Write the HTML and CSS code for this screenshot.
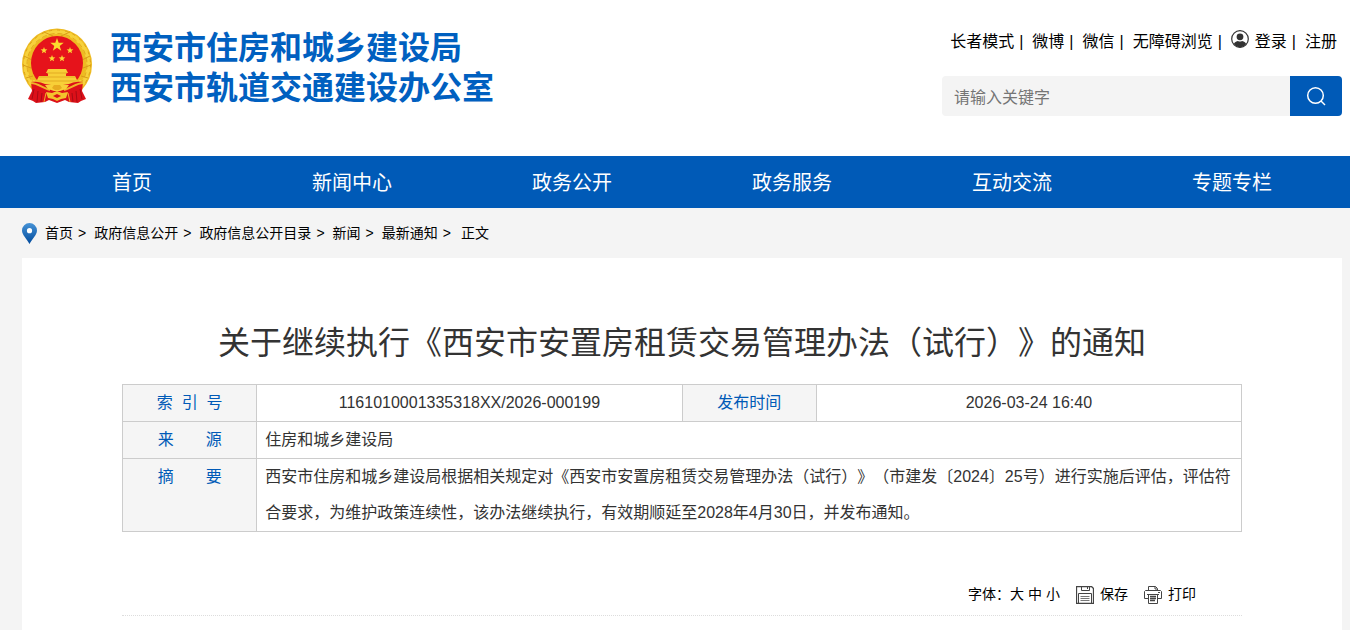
FILE: index.html
```
<!DOCTYPE html>
<html lang="zh-CN">

<head>
    <meta charset="UTF-8">
    <meta name="viewport" content="width=device-width, initial-scale=1.0">
    <title>关于继续执行《西安市安置房租赁交易管理办法（试行）》的通知</title>
    <link rel="stylesheet" href="styles.css">
</head>

<body>
    <header class="header wrap">
        <a class="logo" href="#">
            <svg class="emblem" viewBox="0 0 70 77" aria-hidden="true">
                <!-- wheat ring -->
                <ellipse cx="35" cy="36.500" rx="35" ry="36" fill="#eebb22" />
                <ellipse cx="35" cy="36.500" rx="31.500" ry="32.500" fill="none" stroke="#f7d23c" stroke-width="4" />
                <ellipse cx="35" cy="36.500" rx="30" ry="31" fill="none" stroke="#e2a81c" stroke-width="1" stroke-dasharray="5 3" />
                <ellipse cx="35" cy="36.500" rx="33.500" ry="34.500" fill="none" stroke="#dda31a" stroke-width="1" stroke-dasharray="3 5" />
                <path d="M22 4l9 4M48 4l-9 4M2 28l8 4M1 37l8 3M68 28l-8 4M69 37l-8 3M4 50l7-2M66 50l-7-2" fill="none" stroke="#d99c18" />
                <ellipse cx="35" cy="35" rx="26" ry="27" fill="#e6131b" />
                <!-- stars -->
                <path d="M35 10l1.700 4.700 5 .1-4 3.100 1.500 4.800-4.200-2.900-4.200 2.900 1.500-4.800-4-3.100 5-.1z" fill="#fbdc2e" />
                <path id="star" d="M22 19l.9 2.300 2.500.1-2 1.500.7 2.400-2.100-1.400-2.100 1.400.7-2.400-2-1.500 2.500-.1z" fill="#fbd733" />
                <use href="#star" x="26" />
                <use href="#star" x="8" y="8" />
                <use href="#star" x="18" y="8" />
                <!-- gate -->
                <path d="M26 41h18l2 4h-2v3h9l2 4h4l1 4H10l1-4h4l2-4h9v-3h-2z" fill="#f8cf38" />
                <path d="M25 45h20M17 49h36M13 53h44" stroke="#e3ab22" fill="none" />
                <!-- drapery -->
                <path d="M9 54c5-1 10 0 17 3h18c7-3 12-4 17-3l-1 9 4 8-5 2-3 2-9-1-4-2-8 3-8-3-4 2-9 1-3-2-5-2 4-8z" fill="#dc1019" />
                <path d="M9 55c6 0 12 5 19 7M61 55c-6 0-12 5-19 7" fill="none" stroke="#f0b428" stroke-width="2" />
                <path d="M12 61l-2 10M16 63l-1 11M20 65l-1 9M58 61l2 10M54 63l1 11M50 65l1 9" fill="none" stroke="#a80b14" />
                <path d="M24 65l-2 9M46 65l2 9" stroke="#f0b428" fill="none" />
                <!-- gear -->
                <path d="M23 57l6-1 2-2h8l2 2 6 1-3 4-6 2h-6l-6-2z" fill="#f8cf38" />
                <path d="M30 60l2-3h6l2 3-3 2h-4z" fill="#e8ab20" />
                <path d="M24 64l6 1 5-2 5 2 6-1-2 6-5 1-4 2-4-2-5-1z" fill="#f3c22d" />
                <path d="M31 68l4-2 4 2-4 2z" fill="#dc1019" />
            </svg>
            <span class="logo-text">西安市住房和城乡建设局<br>西安市轨道交通建设办公室</span>
        </a>
        <div class="header-right">
            <div class="top-links">
                <a href="#">长者模式</a><span class="sep">|</span>
                <a href="#">微博</a><span class="sep">|</span>
                <a href="#">微信</a><span class="sep">|</span>
                <a href="#">无障碍浏览</a><span class="sep">|</span>
                <a class="login" href="#">
                    <svg class="user-icon" viewBox="0 0 18 18" aria-hidden="true">
                        <circle cx="9" cy="9" r="8.300" fill="#fff" stroke="#333" stroke-width="1.200" />
                        <circle cx="9" cy="6.800" r="3.400" fill="#333" />
                        <path d="M2.800 14c1.200-2.300 3-3 4.200-3 1.300.8 2.700.8 4 0 1.200 0 3 .7 4.200 3-1.500 2-3.600 3.200-6.200 3.200S4.300 16 2.800 14z" fill="#333" />
                    </svg>登录</a><span class="sep">|</span>
                <a href="#">注册</a>
            </div>
            <form class="search">
                <input type="text" class="search-input" aria-label="请输入关键字" placeholder="请输入关键字">
                <button type="button" class="search-btn" aria-label="搜索">
                    <svg width="20" height="20" viewBox="0 0 20 20" fill="none" stroke="#fff" stroke-width="1.500" aria-hidden="true">
                        <circle cx="9.500" cy="9.500" r="7.800" />
                        <path d="M15 15l4 4" />
                    </svg>
                </button>
            </form>
        </div>
    </header>

    <nav class="nav">
        <div class="nav-list wrap">
            <a href="#">首页</a>
            <a href="#">新闻中心</a>
            <a href="#">政务公开</a>
            <a href="#">政务服务</a>
            <a href="#">互动交流</a>
            <a href="#">专题专栏</a>
        </div>
    </nav>

    <main class="wrap">
        <div class="crumbs">
            <svg class="pin" viewBox="0 0 15 21" aria-hidden="true">
                <defs>
                    <linearGradient id="pinFill" x1="0" y1="0" x2="0" y2="1">
                        <stop offset="0" stop-color="#4793d6" />
                        <stop offset="1" stop-color="#004a9c" />
                    </linearGradient>
                </defs>
                <path d="M7.500 0A7.500 7.500 0 0 0 0 7.500C0 12 5 16 7.500 21 10 16 15 12 15 7.500A7.500 7.500 0 0 0 7.500 0z" fill="url(#pinFill)" />
                <circle cx="7.500" cy="7.700" r="2.600" fill="#fff" />
            </svg>
            <a href="#">首页</a><span class="arrow">&gt;</span>
            <a href="#">政府信息公开</a><span class="arrow">&gt;</span>
            <a href="#">政府信息公开目录</a><span class="arrow">&gt;</span>
            <a href="#">新闻</a><span class="arrow">&gt;</span>
            <a href="#">最新通知</a><span class="arrow">&gt;</span>
            <span class="current">正文</span>
        </div>

        <article class="article">
            <h1 class="title">关于继续执行《西安市安置房租赁交易管理办法（试行）》的通知</h1>
            <table class="info">
                <tr>
                    <th>索&nbsp;&nbsp;引&nbsp;&nbsp;号</th>
                    <td class="center">1161010001335318XX/2026-000199</td>
                    <th>发布时间</th>
                    <td class="center">2026-03-24 16:40</td>
                </tr>
                <tr>
                    <th>来&emsp;&emsp;源</th>
                    <td colspan="3">住房和城乡建设局</td>
                </tr>
                <tr>
                    <th>摘&emsp;&emsp;要</th>
                    <td colspan="3">西安市住房和城乡建设局根据相关规定对《西安市安置房租赁交易管理办法（试行）》（市建发〔2024〕25号）进行实施后评估，评估符合要求，为维护政策连续性，该办法继续执行，有效期顺延至2028年4月30日，并发布通知。</td>
                </tr>
            </table>
            <div class="tools">
                <div class="font-size">
                    <span>字体：</span>
                    <a href="#">大</a>
                    <a href="#">中</a>
                    <a href="#">小</a>
                </div>
                <a class="tool" href="#">
                    <svg width="18" height="18" viewBox="0 0 18 18" fill="none" stroke="#444" aria-hidden="true">
                        <path d="M.5.500h15l2 2v15H.5z" stroke-width="1.300" />
                        <path d="M5.500.500v4h8v-4M11.500 1v2" />
                        <path d="M2.500 17V7.500h13V17" />
                        <path d="M4.500 10.500h9M4.500 12.500h9M4.500 14.500h9" stroke="#777" />
                    </svg>保存</a>
                <a class="tool" href="#">
                    <svg width="18" height="18" viewBox="0 0 18 18" fill="none" stroke="#444" aria-hidden="true">
                        <path d="M4.500 4.500v-4h7l2 2v2M11 .500v2.500h2" />
                        <path d="M4 12.500H.5v-7l1-1h15l1 1v7H14" />
                        <path d="M3 8.500h12M4.500 8.500v9h9v-9" />
                        <path d="M6 10.500h6M6 12.500h6M6 14.500h5" stroke-width="1.500" />
                        <path d="M14 6.500h2" />
                    </svg>打印</a>
            </div>
        </article>
    </main>
</body>

</html>
```
FILE: styles.css
```
* {
    box-sizing: border-box;
}

body {
    margin: 0;
    font-family: "Liberation Sans", "Noto Sans CJK SC", sans-serif;
    font-size: 16px;
    color: #333;
    background-color: #f4f4f4;
    text-spacing-trim: space-all;
}

a {
    color: inherit;
    text-decoration: none;
}

.wrap {
    padding: 0 8px 0 22px;
}

/* Header */
.header {
    display: flex;
    justify-content: space-between;
    height: 156px;
    background-color: #fff;
}

.logo {
    display: flex;
    align-items: flex-start;
    gap: 18px;
    padding-top: 28px;
}

.emblem {
    width: 70px;
    height: 77px;
}

.logo-text {
    font-size: 32px;
    font-weight: bold;
    line-height: 40px;
    color: #0060c0;
}

.header-right {
    width: 400px;
    padding-top: 30px;
}

.top-links {
    display: flex;
    justify-content: flex-end;
    height: 24px;
    padding-right: 5px;
    line-height: 24px;
    color: #000;
    white-space: nowrap;
}

.sep {
    margin: 0 9px 0 5px;
}

.login {
    display: flex;
}

.user-icon {
    width: 18px;
    height: 18px;
    margin-right: 6px;
}

.search {
    display: flex;
    height: 40px;
    margin-top: 22px;
}

.search-input {
    flex: 1;
    min-width: 0;
    padding: 3px 12px 0;
    border: none;
    border-radius: 4px 0 0 4px;
    background-color: #f4f4f4;
    font-family: inherit;
    font-size: 16px;
}

.search-input::placeholder {
    color: #757575;
}

.search-btn {
    display: flex;
    align-items: center;
    justify-content: center;
    width: 52px;
    padding: 0;
    border: none;
    border-radius: 0 4px 4px 0;
    background-color: #005ab7;
    cursor: pointer;
}

/* Navigation */
.nav {
    background-color: #005ab7;
}

.nav-list {
    display: flex;
    height: 52px;
}

.nav-list a {
    flex: 1;
    font-size: 20px;
    line-height: 54px;
    text-align: center;
    color: #fff;
}

/* Breadcrumb */
.crumbs {
    display: flex;
    align-items: center;
    height: 50px;
    font-size: 14px;
    line-height: 24px;
    color: #000;
}

.pin {
    width: 15px;
    height: 21px;
    margin-right: 8px;
}

.arrow {
    margin: 0 8px 0 5px;
}

.current {
    margin-left: 2px;
}

/* Article */
.article {
    min-height: 372px;
    padding: 60px 100px 0;
    background-color: #fff;
}

.title {
    margin: 0;
    font-size: 32px;
    font-weight: normal;
    line-height: 50px;
    text-align: center;
}

.info {
    width: 100%;
    margin-top: 16px;
    border-collapse: collapse;
    table-layout: fixed;
    line-height: 36px;
}

.info th,
.info td {
    padding: 0 8px;
    border: 1px solid #ccc;
    text-align: left;
    vertical-align: top;
}

.info th {
    width: 12%;
    background-color: #f5f5f5;
    font-weight: normal;
    text-align: center;
    color: #005ab7;
}

.info .center {
    text-align: center;
}

.tools {
    display: flex;
    justify-content: flex-end;
    gap: 16px;
    margin-top: 42px;
    padding: 0 46px 0 0;
    border-bottom: 1px dotted #ddd;
    font-size: 14px;
    line-height: 41px;
    color: #000;
}

.font-size {
    display: flex;
    gap: 4px;
}

.font-size span {
    margin-right: -4px;
}

.tool {
    display: flex;
    align-items: center;
    gap: 6px;
}
```
